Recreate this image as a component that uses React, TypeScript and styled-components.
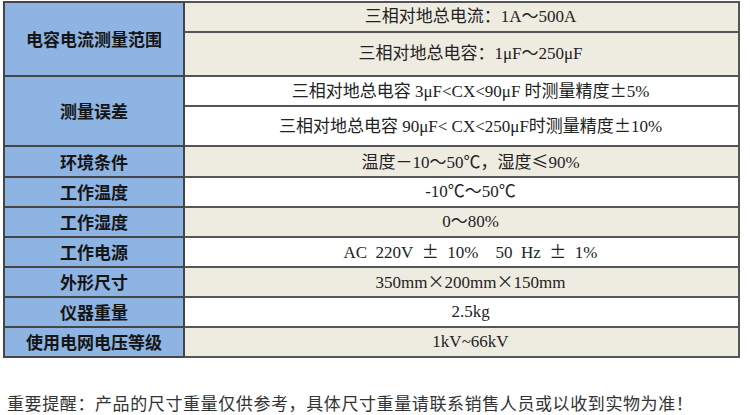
import React from "react";
import styled, { createGlobalStyle } from "styled-components";

const GlobalStyle = createGlobalStyle`
  html, body {
    margin: 0;
    padding: 0;
    background: #ffffff;
  }
  body {
    font-family: "Noto Sans CJK SC", "Noto Sans", sans-serif;
  }
`;

const Page = styled.div`
  width: 750px;
  height: 415px;
  overflow: hidden;
  padding: 1px 0 0 3px;
  box-sizing: border-box;
`;

const SpecTable = styled.table`
  width: 737px;
  border-collapse: collapse;
  table-layout: fixed;
`;

const Row = styled.tr<{ $h: number }>`
  height: ${({ $h }) => $h}px;
`;

const Label = styled.th`
  width: 178px;
  padding: 0;
  background: #8db4e2;
  border: 2px solid #454545;
  font-family: "Noto Sans CJK SC", sans-serif;
  font-weight: 700;
  font-size: 17px;
  color: #151515;
  text-align: center;
  vertical-align: middle;
  line-height: 20px;
`;

const Value = styled.td<{ $tint: boolean }>`
  padding: 0 0 0 18px;
  background: ${({ $tint }) => ($tint ? "#eeece1" : "#ffffff")};
  border: 2px solid #555555;
  font-family: "Liberation Serif", "Noto Sans CJK SC", serif;
  font-size: 17px;
  color: #222222;
  text-align: center;
  vertical-align: middle;
  white-space: pre;
  line-height: 20px;
`;

/* full-width symbols (×, ±, ≤) as the original SimSun draws them */
const Wide = styled.span`
  font-family: "Noto Sans CJK SC", sans-serif;
`;

/* SimSun spaces are half an em wide, twice a Liberation Serif space */
const Gap = styled.span<{ $n?: number }>`
  display: inline-block;
  width: ${({ $n = 1 }) => $n * 8.5}px;
`;

const Note = styled.p`
  margin: 35px 0 0 4px;
  font-family: "Noto Sans CJK SC", sans-serif;
  font-size: 17px;
  line-height: 20px;
  letter-spacing: 0.6px;
  color: #333333;
  white-space: nowrap;
`;

type Spec = { label: string; values: { text: React.ReactNode; h: number; tint: boolean }[] };

const specs: Spec[] = [
  {
    label: "电容电流测量范围",
    values: [
      { text: "三相对地总电流：1A～500A", h: 30, tint: true },
      { text: "三相对地总电容：1μF～250μF", h: 44, tint: true },
    ],
  },
  {
    label: "测量误差",
    values: [
      {
        text: <>三相对地总电容 3μF&lt;CX&lt;90μF 时测量精度<Wide>±</Wide>5%</>,
        h: 30,
        tint: false,
      },
      {
        text: <>三相对地总电容 90μF&lt; CX&lt;250μF时测量精度<Wide>±</Wide>10%</>,
        h: 40,
        tint: false,
      },
    ],
  },
  {
    label: "环境条件",
    values: [{ text: <>温度－10～50℃，湿度<Wide>≤</Wide>90%</>, h: 31, tint: true }],
  },
  { label: "工作温度", values: [{ text: "-10℃～50℃", h: 30, tint: false }] },
  { label: "工作湿度", values: [{ text: "0～80%", h: 30, tint: true }] },
  {
    label: "工作电源",
    values: [
      {
        text: (
          <>
            AC<Gap />220V<Gap /><Wide>±</Wide><Gap />10%<Gap $n={2} />50<Gap />Hz<Gap />
            <Wide>±</Wide><Gap />1%
          </>
        ),
        h: 30,
        tint: false,
      },
    ],
  },
  {
    label: "外形尺寸",
    values: [{ text: <>350mm<Wide>×</Wide>200mm<Wide>×</Wide>150mm</>, h: 30, tint: true }],
  },
  { label: "仪器重量", values: [{ text: "2.5kg", h: 30, tint: false }] },
  { label: "使用电网电压等级", values: [{ text: "1kV~66kV", h: 30, tint: true }] },
];

export default function App() {
  return (
    <>
      <GlobalStyle />
      <Page>
        <SpecTable>
          <colgroup>
            <col style={{ width: 180 }} />
            <col />
          </colgroup>
          <tbody>
            {specs.map((spec) =>
              spec.values.map((v, i) => (
                <Row key={spec.label + i} $h={v.h}>
                  {i === 0 && <Label rowSpan={spec.values.length}>{spec.label}</Label>}
                  <Value $tint={v.tint}>{v.text}</Value>
                </Row>
              ))
            )}
          </tbody>
        </SpecTable>
        <Note>重要提醒：产品的尺寸重量仅供参考，具体尺寸重量请联系销售人员或以收到实物为准！</Note>
      </Page>
    </>
  );
}
